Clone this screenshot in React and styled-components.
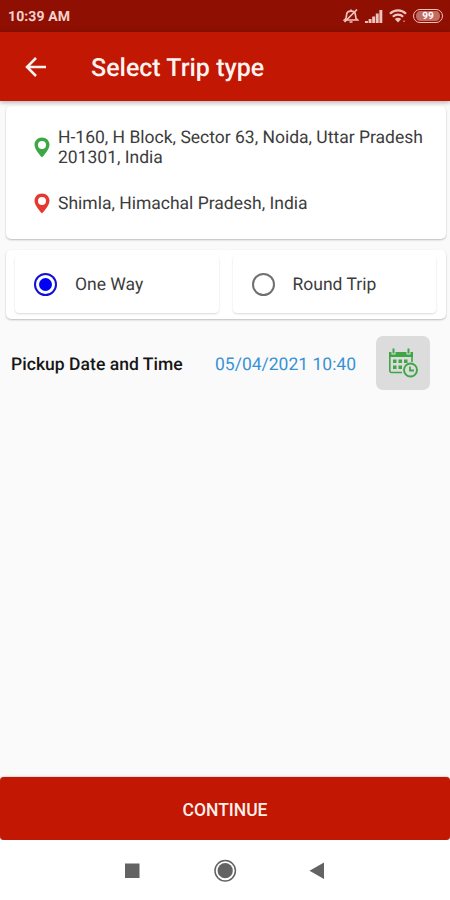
import React, { useState } from 'react';
import styled, { createGlobalStyle } from 'styled-components';

const GlobalStyle = createGlobalStyle`
  * {
    box-sizing: border-box;
  }

  body {
    margin: 0;
    background: #fafafa;
    font-family: Roboto, 'Liberation Sans', sans-serif;
    text-rendering: geometricPrecision;
  }
`;

const stops = [
  { id: 'from', color: '#3fa648', text: 'H-160, H Block, Sector 63, Noida, Uttar Pradesh 201301, India' },
  { id: 'to', color: '#e5392f', text: 'Shimla, Himachal Pradesh, India' },
];

export default function App() {
  const [trip, setTrip] = useState('one');

  return (
    <Screen>
      <GlobalStyle />
      <StatusBar>
        <Clock>10:39 AM</Clock>
        <StatusIcons>
          <MutedBell />
          <Signal />
          <Wifi />
          <Battery>99</Battery>
        </StatusIcons>
      </StatusBar>
      <Header>
        <BackButton aria-label="Back">
          <BackArrow />
        </BackButton>
        <Title>Select Trip type</Title>
      </Header>
      <Content>
        <RouteCard>
          {stops.map((stop) => (
            <Stop key={stop.id}>
              <Pin color={stop.color} />
              <Address>{stop.text}</Address>
            </Stop>
          ))}
        </RouteCard>
        <TripCard>
          <Option onClick={() => setTrip('one')}>
            <Radio $checked={trip === 'one'} />
            <OptionLabel>One Way</OptionLabel>
          </Option>
          <Option onClick={() => setTrip('round')}>
            <Radio $checked={trip === 'round'} />
            <OptionLabel>Round Trip</OptionLabel>
          </Option>
        </TripCard>
        <PickupRow>
          <PickupLabel>Pickup Date and Time</PickupLabel>
          <PickupTime>05/04/2021 10:40</PickupTime>
          <CalendarButton aria-label="Pick date">
            <CalendarClock />
          </CalendarButton>
        </PickupRow>
      </Content>
      <Continue>CONTINUE</Continue>
      <NavBar>
        <NavIcons />
      </NavBar>
    </Screen>
  );
}

const MutedBell = () => (
  <svg width="16" height="16" viewBox="0 0 16 16" fill="none" stroke="#f0c4be" strokeWidth="1.7">
    <path d="M1.500 12c1.500-.9 2-2 2-4.500C3.500 5 5.300 3.200 8 3.200S12.500 5 12.500 7.500c0 2.500.5 3.600 2 4.500z" />
    <path d="M6.500 14h3M8 3.300V1.500M1.500 14L14 1.500" />
  </svg>
);

const Signal = () => (
  <svg width="18" height="13" viewBox="0 0 18 13" fill="#f0c4be">
    <path d="M0 11h2.900v2H0zM3.600 9h2.900v4H3.600zM7.200 6.500h2.900V13H7.200zM10.800 3.500h2.900V13h-2.900zM14.400 0h2.900v13h-2.900z" />
  </svg>
);

const Wifi = () => (
  <svg width="18" height="14" viewBox="0 0 18 14" fill="none" stroke="#f0c4be" strokeWidth="2.200">
    <path d="M1 4.800C5.500.3 12.500.3 17 4.800M3.800 7.700c3-2.900 7.400-2.900 10.400 0" />
    <path d="M5.800 10c1.900-1.700 4.500-1.700 6.400 0L9 13.500z" fill="#f0c4be" stroke="none" />
    <path d="M14 12.300h2" strokeWidth="1.500" opacity="0.5" />
  </svg>
);

const BackArrow = () => (
  <svg width="22" height="20" viewBox="0 0 22 20" fill="none" stroke="#fff3f0" strokeWidth="2.500">
    <path d="M21 10H2.500M11 1L2 10l9 9" />
  </svg>
);

const Pin = ({ color }) => (
  <PinSvg width="16" height="21" viewBox="0 0 16 21">
    <path
      fill={color}
      fillRule="evenodd"
      d="M8 .5C3.700.5.500 3.700.500 7.800.500 13 8 20.500 8 20.500s7.500-7.500 7.500-12.700C15.500 3.700 12.300.5 8 .5zm0 3.400a4 4 0 1 1 0 8 4 4 0 0 1 0-8z"
    />
  </PinSvg>
);

const CalendarClock = () => (
  <svg width="30" height="30" viewBox="0 0 30 30" fill="none" stroke="#3fa648" strokeWidth="1.600">
    <path d="M14 24.500H3.500A1.700 1.700 0 0 1 1.800 22.800V4.800H24V14" />
    <path d="M1 4h24v5H1z" fill="#3fa648" stroke="none" />
    <path d="M5.500.5v6M20.500.5v6" stroke="#dcdcdc" strokeWidth="4" />
    <path d="M5.500.5v5M20.500.5v5" strokeWidth="2" />
    <path
      d="M5 11.500h3.500v3.500H5zM10.500 11.500h3.500v3.500h-3.500zM16 11.500h3.500v3.500H16zM5 17.500h3.500v3.500H5zM10.500 17.500h3.500v3.500h-3.500z"
      fill="#3fa648"
      stroke="none"
    />
    <circle cx="22.500" cy="22" r="6.500" fill="#dcdcdc" strokeWidth="1.900" />
    <path d="M22 18.500V22.500h4" strokeWidth="1.800" />
  </svg>
);

const NavIcons = () => (
  <svg width="200" height="24" viewBox="0 0 200 24" fill="#636363">
    <path d="M0 5.500h14.500V20H0zM199 4.500v16.500L184.500 12.800z" />
    <circle cx="100.200" cy="12.700" r="10.200" fill="none" stroke="#636363" strokeWidth="1.500" />
    <circle cx="100.200" cy="12.700" r="7.600" />
  </svg>
);

const Screen = styled.div`
  display: flex;
  flex-direction: column;
  width: 450px;
  height: 900px;
  overflow: hidden;
  background: #fafafa;
`;

const StatusBar = styled.div`
  display: flex;
  align-items: center;
  justify-content: space-between;
  height: 32px;
  padding: 0 7px 0 8px;
  background: #8f1002;
`;

const Clock = styled.span`
  padding-top: 2px;
  color: #f6d3ce;
  font-size: 14px;
  font-weight: 700;
  letter-spacing: 0.1px;
`;

const StatusIcons = styled.div`
  display: flex;
  align-items: center;
  gap: 6px;
`;

const Battery = styled.span`
  display: flex;
  align-items: center;
  justify-content: center;
  width: 30px;
  height: 14px;
  border: 1.5px solid #f0c4be;
  border-radius: 7px;
  background: #c06d64;
  background-clip: content-box;
  padding: 1px 2px;
  color: #fff;
  font-size: 10px;
  font-weight: 700;
`;

const Header = styled.header`
  display: flex;
  align-items: center;
  height: 69px;
  flex-shrink: 0;
  padding: 0 25px;
  background: #c11703;
  box-shadow: 0 1px 5px rgba(0, 0, 0, 0.35);
  z-index: 1;
`;

const BackButton = styled.button`
  display: flex;
  width: 66px;
  padding: 0;
  border: 0;
  background: none;
`;

const Title = styled.h1`
  margin: 4px 0 0;
  color: #fff3f0;
  font-size: 25px;
  font-weight: 500;
`;

const Content = styled.main`
  flex: 1;
  padding: 5px 4px 0 6px;
`;

const Card = styled.section`
  border-radius: 5px;
  background: #fff;
  box-shadow: 0 1px 2px rgba(0, 0, 0, 0.25);
`;

const RouteCard = styled(Card)`
  display: flex;
  flex-direction: column;
  gap: 26px;
  height: 133px;
  padding: 22px 10px 0 28px;
`;

const Stop = styled.div`
  display: flex;
  align-items: center;
  gap: 8px;
`;

const PinSvg = styled.svg`
  flex-shrink: 0;
  margin-top: -2px;
`;

const Address = styled.span`
  color: #3c3c3c;
  font-size: 17.5px;
  line-height: 20px;
`;

const TripCard = styled(Card)`
  display: flex;
  gap: 14px;
  height: 69px;
  margin-top: 11px;
  padding: 5px 10px 6px 9px;
`;

const Option = styled.div`
  display: flex;
  flex: 1;
  align-items: center;
  gap: 18px;
  padding-left: 19px;
  border-radius: 4px;
  box-shadow: 0 1px 2px rgba(0, 0, 0, 0.15);
`;

const OptionLabel = styled.span`
  padding-top: 2px;
  color: #3c3c3c;
  font-size: 17.5px;
`;

const Radio = styled.span`
  width: 23px;
  height: 23px;
  border: 2.5px solid ${(props) => (props.$checked ? '#1010d8' : '#707070')};
  border-radius: 50%;
  padding: 3px;
  background: ${(props) => (props.$checked ? '#0000f5' : 'transparent')};
  background-clip: content-box;
`;

const PickupRow = styled.div`
  display: flex;
  align-items: center;
  margin-top: 17px;
  padding: 0 16px 0 5px;
  font-size: 17.5px;
`;

const PickupLabel = styled.span`
  width: 204px;
  padding-top: 3px;
  color: #161616;
  font-weight: 500;
  letter-spacing: 0.04px;
`;

const PickupTime = styled.span`
  padding-top: 3px;
  color: #3792d6;
`;

const CalendarButton = styled.button`
  display: flex;
  align-items: center;
  justify-content: center;
  width: 54px;
  height: 54px;
  margin-left: auto;
  padding: 0;
  border: 0;
  border-radius: 7px;
  background: #dcdcdc;
`;

const Continue = styled.button`
  height: 63px;
  padding: 2px 0 0;
  border: 0;
  border-radius: 4px;
  background: #c11703;
  box-shadow: 0 0 2px rgba(0, 0, 0, 0.4);
  color: #fff0ec;
  font-family: inherit;
  font-size: 17.5px;
  font-weight: 500;
`;

const NavBar = styled.nav`
  display: flex;
  justify-content: center;
  height: 60px;
  padding-top: 18px;
  background: #fff;
`;
